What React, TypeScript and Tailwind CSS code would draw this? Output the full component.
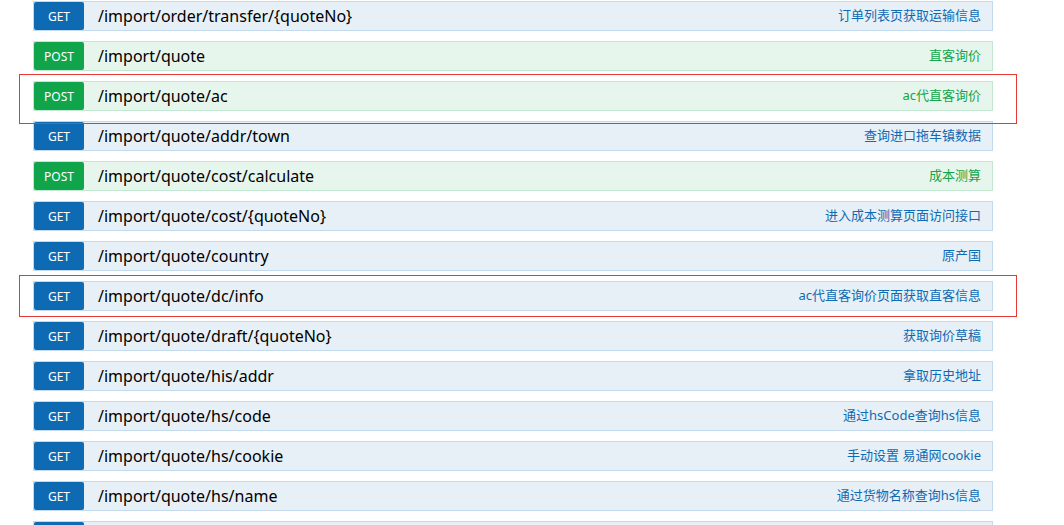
const endpoints = [
  { method: "GET", path: "/import/order/transfer/{quoteNo}", desc: "订单列表页获取运输信息" },
  { method: "POST", path: "/import/quote", desc: "直客询价" },
  { method: "POST", path: "/import/quote/ac", desc: "ac代直客询价" },
  { method: "GET", path: "/import/quote/addr/town", desc: "查询进口拖车镇数据" },
  { method: "POST", path: "/import/quote/cost/calculate", desc: "成本测算" },
  { method: "GET", path: "/import/quote/cost/{quoteNo}", desc: "进入成本测算页面访问接口" },
  { method: "GET", path: "/import/quote/country", desc: "原产国" },
  { method: "GET", path: "/import/quote/dc/info", desc: "ac代直客询价页面获取直客信息" },
  { method: "GET", path: "/import/quote/draft/{quoteNo}", desc: "获取询价草稿" },
  { method: "GET", path: "/import/quote/his/addr", desc: "拿取历史地址" },
  { method: "GET", path: "/import/quote/hs/code", desc: "通过hsCode查询hs信息" },
  { method: "GET", path: "/import/quote/hs/cookie", desc: "手动设置 易通网cookie" },
  { method: "GET", path: "/import/quote/hs/name", desc: "通过货物名称查询hs信息" },
  { method: "GET", path: "/import/quote/info", desc: "询价信息" },
];

const App = () => {
  return (
    <div className="relative h-[525px] overflow-hidden bg-white font-['Noto_Sans','Noto_Sans_CJK_SC',sans-serif]">
      <ul className="ml-[33px] mt-px w-[960px]">
        {endpoints.map((ep, i) => {
          const isGet = ep.method === "GET";
          return (
            <li
              key={i}
              className={
                isGet
                  ? "mb-[10px] flex h-[30px] items-center border border-[#c3d9ec] bg-[#e7f0f7]"
                  : "mb-[10px] flex h-[30px] items-center border border-[#c3e8d1] bg-[#e7f6ec]"
              }
            >
              <span
                className={
                  isGet
                    ? "flex h-full w-[50px] items-center justify-center rounded-[2px] bg-[#0f6ab4] pt-px text-[12px] text-white"
                    : "flex h-full w-[50px] items-center justify-center rounded-[2px] bg-[#10a54a] pt-px text-[12px] text-white"
                }
              >
                {ep.method}
              </span>
              <span className="ml-[14px] flex-1 text-[16px] text-black">{ep.path}</span>
              <span
                className={
                  isGet
                    ? "mr-[11px] text-[13px] text-[#0f6ab4]"
                    : "mr-[11px] text-[13px] text-[#10a54a]"
                }
              >
                {ep.desc}
              </span>
            </li>
          );
        })}
      </ul>

      {/* annotation boxes */}
      <div className="absolute left-[19px] top-[74px] h-[50px] w-[998px] border border-[#e53935]" />
      <div className="absolute left-[19px] top-[275px] h-[42px] w-[998px] border border-[#e53935]" />
    </div>
  );
};

export default App;
